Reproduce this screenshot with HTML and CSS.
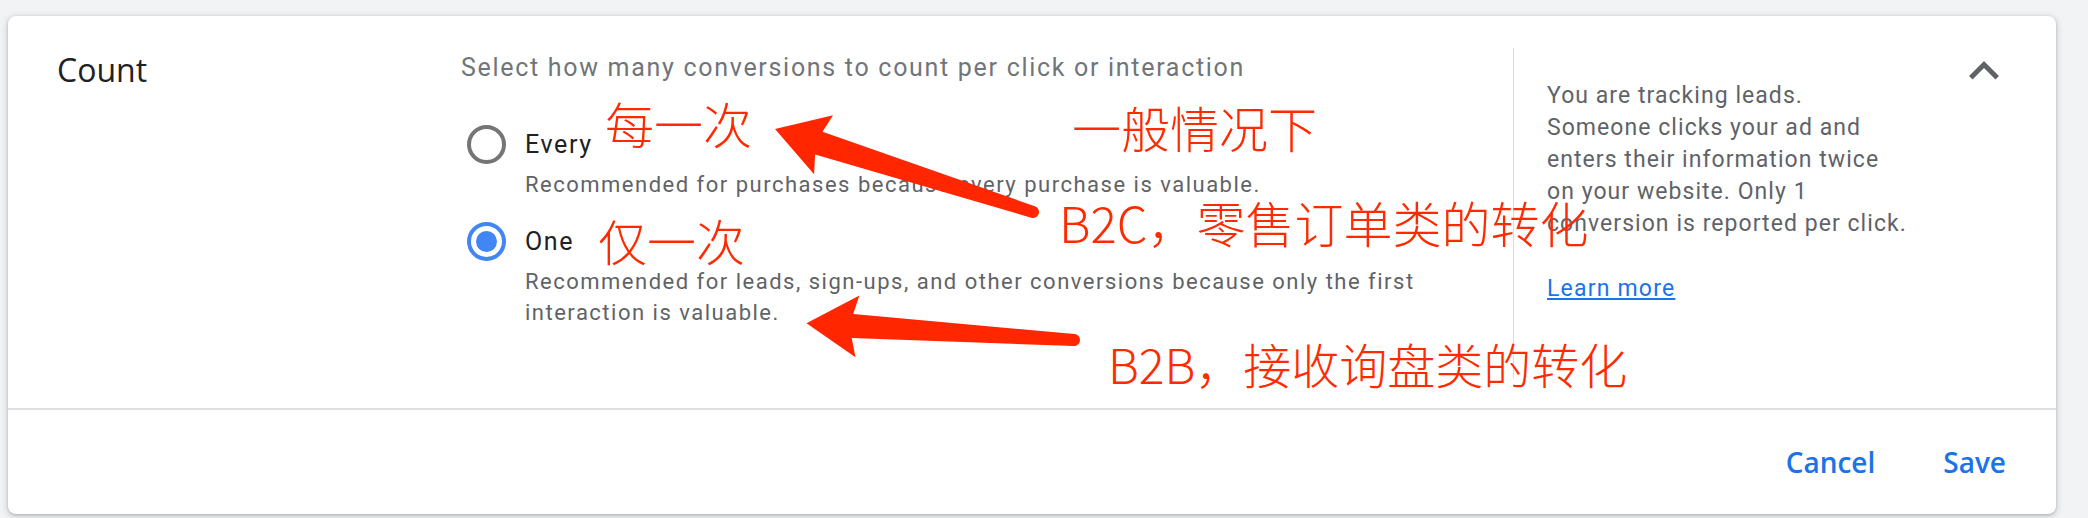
FILE: index.html
```html
<!DOCTYPE html>
<html lang="en">
<head>
<meta charset="utf-8">
<title>Count</title>
<link rel="stylesheet" href="styles.css">
</head>
<body>
  <section class="card">
    <div class="card-body">
      <h2 class="title">Count</h2>

      <div class="options">
        <p class="prompt">Select how many conversions to count per click or interaction</p>

        <div class="option">
          <div class="option-row">
            <span class="radio"></span>
            <span class="label">Every</span>
          </div>
          <p class="hint">Recommended for purchases because every purchase is valuable.</p>
        </div>

        <div class="option option-next">
          <div class="option-row">
            <span class="radio radio-checked"></span>
            <span class="label">One</span>
          </div>
          <p class="hint">Recommended for leads, sign-ups, and other conversions because only the first interaction is valuable.</p>
        </div>
      </div>

      <aside class="help">
        <p class="help-text">You are tracking leads.<br>Someone clicks your ad and<br>enters their information twice<br>on your website. Only 1<br>conversion is reported per click.</p>
        <a class="help-link" href="#">Learn more</a>
      </aside>

      <button class="collapse" type="button" aria-label="Collapse">
        <svg viewBox="0 0 24 24" width="60" height="60"><path d="M12 8l-6 6 1.41 1.41L12 10.83l4.59 4.58L18 14z" fill="#5f6368"/></svg>
      </button>
    </div>

    <div class="card-footer">
      <button class="text-btn" type="button">Cancel</button>
      <button class="text-btn" type="button">Save</button>
    </div>
  </section>

  <div class="notes" aria-hidden="true">
    <svg class="arrows" width="2088" height="518" viewBox="0 0 2088 518">
      <g transform="translate(1033 212) rotate(-162.17)">
        <path d="M0 -6 L225 -12 L220 -31 L271 0 L220 31 L225 12 L0 6 A6 6 0 0 1 0 -6 Z" fill="#ff2600"/>
      </g>
      <g transform="translate(1074 340) rotate(-176.4)">
        <path d="M0 -6 L222 -12 L217 -31 L268 0 L217 31 L222 12 L0 6 A6 6 0 0 1 0 -6 Z" fill="#ff2600"/>
      </g>
    </svg>
    <span class="note note-every">每一次</span>
    <span class="note note-usual">一般情况下</span>
    <span class="note note-b2c">B2C，零售订单类的转化</span>
    <span class="note note-one">仅一次</span>
    <span class="note note-b2b">B2B，接收询盘类的转化</span>
  </div>
</body>
</html>
```

FILE: styles.css
```css
* {
  box-sizing: border-box;
}

body {
  margin: 0;
  width: 2088px;
  height: 518px;
  overflow: hidden;
  position: relative;
  background: #f1f3f4;
  font-family: Roboto, "Noto Sans", Arial, sans-serif;
}

/* Card */
.card {
  margin: 16px 32px 0 8px;
  height: 498px;
  background: #fff;
  border-radius: 8px;
  box-shadow: 0 1px 3px rgba(60, 64, 67, 0.3), 0 2px 6px 2px rgba(60, 64, 67, 0.12);
  display: flex;
  flex-direction: column;
}

.card-body {
  display: flex;
  height: 394px;
  padding: 32px 42px 30px 49px;
  border-bottom: 2px solid #e0e0e0;
}

.title {
  flex: 0 0 404px;
  margin: 4px 0 0;
  font: 400 32px/36px "Open Sans", Arial, sans-serif;
  color: #202124;
}

/* Options column */
.options {
  flex: 1;
  padding-right: 40px;
}

.prompt {
  margin: 5px 0 0;
  font-size: 25px;
  line-height: 30px;
  letter-spacing: 1.7px;
  color: #70757a;
}

.option {
  margin-top: 42px;
}

.option-next {
  margin-top: 22px;
}

.option-row {
  display: flex;
  align-items: center;
  height: 39px;
}

.radio {
  flex: 0 0 39px;
  width: 39px;
  height: 39px;
  margin: 0 19px 0 6px;
  border: 4px solid #757575;
  border-radius: 50%;
  display: grid;
  place-items: center;
}

.radio-checked {
  border-color: #4285f4;
}

.radio-checked::after {
  content: "";
  width: 21px;
  height: 21px;
  border-radius: 50%;
  background: #4285f4;
}

.label {
  font-size: 25px;
  line-height: 39px;
  letter-spacing: 1.6px;
  color: #202124;
}

.hint {
  margin: 5px 0 0 64px;
  font-size: 22px;
  line-height: 31px;
  letter-spacing: 1.5px;
  color: #5f6368;
}

/* Help panel */
.help {
  flex: 0 0 441px;
  border-left: 1px solid #dadce0;
  padding: 32px 0 0 33px;
  font-size: 23px;
  line-height: 32px;
  letter-spacing: 1.05px;
  color: #5f6368;
}

.help-text {
  margin: 0 0 33px;
}

.help-link {
  color: #1a73e8;
  letter-spacing: 1.2px;
  text-decoration: underline;
}

.collapse {
  flex: 0 0 60px;
  height: 60px;
  margin-top: -7px;
  padding: 0;
  border: 0;
  background: none;
}

.collapse svg {
  display: block;
}

/* Footer */
.card-footer {
  flex: 1;
  display: flex;
  justify-content: flex-end;
  align-items: center;
  gap: 32px;
  padding-right: 32px;
}

.text-btn {
  padding: 0 18px;
  border: 0;
  background: none;
  font: 600 28px/48px "Open Sans", Arial, sans-serif;
  color: #1a73e8;
}

/* Red hand-written notes laid over the card */
.notes {
  position: absolute;
  inset: 0;
  pointer-events: none;
}

.arrows {
  position: absolute;
  left: 0;
  top: 0;
}

.note {
  position: absolute;
  font-family: "Noto Sans CJK SC", "Noto Sans", sans-serif;
  font-size: 49px;
  font-weight: 300;
  line-height: 49px;
  color: #ff2a00;
  white-space: nowrap;
}

.note-every { left: 605px; top: 98px; }
.note-usual { left: 1072px; top: 102px; }
.note-b2c   { left: 1059px; top: 197px; }
.note-one   { left: 598px;  top: 215px; }
.note-b2b   { left: 1108px; top: 339px; font-size: 48px; }
```
